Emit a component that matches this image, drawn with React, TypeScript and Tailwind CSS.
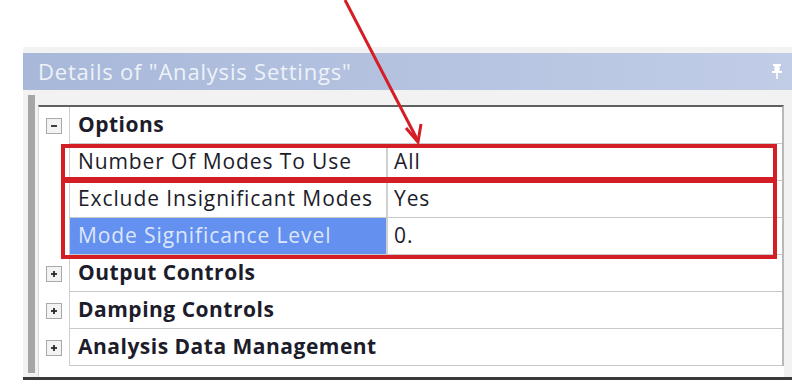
import React from "react";

// ── DETAILS PANEL DATA ────────────────────────────────────────
type Prop = { label: string; value: string; selected?: boolean };

const OPTIONS: Prop[] = [
  { label: "Number Of Modes To Use", value: "All" },
  { label: "Exclude Insignificant Modes", value: "Yes" },
  { label: "Mode Significance Level", value: "0.", selected: true },
];

const GROUPS = ["Output Controls", "Damping Controls", "Analysis Data Management"];
// ─────────────────────────────────────────────────────────────

const FONT = "font-['Open_Sans','Noto_Sans',sans-serif]";

function ExpandBox({ open }: { open: boolean }) {
  return (
    <div className="flex h-[16px] w-[16px] items-center justify-center border border-[#a9a9a9] bg-[#f3f3f3]">
      <svg width="10" height="10" viewBox="0 0 10 10">
        <path d="M2 5 H8" stroke="#2a2a2a" strokeWidth="1.8" />
        {!open && <path d="M5 2 V8" stroke="#2a2a2a" strokeWidth="1.8" />}
      </svg>
    </div>
  );
}

function GroupRow({ title, open }: { title: string; open: boolean }) {
  return (
    <div className="flex h-[37px]">
      <div className="flex w-[31px] shrink-0 items-center justify-center border-r border-[#cfcfcf] bg-white">
        <ExpandBox open={open} />
      </div>
      <div className="flex flex-1 items-center border-b border-[#c9c9c9] pl-[8px] text-[21px] font-bold tracking-[0.5px] text-[#1c1c2a]">
        {title}
      </div>
    </div>
  );
}

function PropRow({ p }: { p: Prop }) {
  return (
    <div className="flex h-[37px]">
      <div className="w-[31px] shrink-0 border-r border-[#cfcfcf] bg-white" />
      <div className="flex flex-1 border-b border-[#c9c9c9] text-[21px] tracking-[0.9px]">
        <div
          className={
            p.selected
              ? "flex w-[316px] items-center bg-[#6490f0] pl-[8px] text-[#dde7fb]"
              : "flex w-[316px] items-center pl-[8px] text-[#1c1c2a]"
          }
        >
          {p.label}
        </div>
        <div className="flex flex-1 items-center border-l-2 border-[#d0d0d0] pl-[6px] text-[#1c1c2a]">
          {p.value}
        </div>
      </div>
    </div>
  );
}

export default function App() {
  return (
    <div className={`relative h-[387px] w-[792px] overflow-hidden bg-white ${FONT}`}>
      <div className="h-[47px]" />

      {/* Panel */}
      <div className="ml-[23px] flex h-[333px] flex-col bg-[#f2f2f2] pt-[6px]">
        {/* Title bar */}
        <div className="flex h-[37px] items-center justify-between bg-gradient-to-r from-[#a8b8d9] to-[#c1cde7] pl-[15px] pr-[10px]">
          <span className="text-[22px] tracking-[0.8px] text-[#eef2f9]">Details of "Analysis Settings"</span>
          <svg width="10" height="15" viewBox="0 0 10 15" fill="#ffffff">
            <rect x="1" y="0" width="8" height="2" />
            <rect x="2.5" y="2" width="5" height="6" />
            <rect x="0" y="7" width="10" height="2" />
            <rect x="4.2" y="9" width="1.6" height="6" />
          </svg>
        </div>

        {/* Body */}
        <div className="flex flex-1 pl-[5px] pt-[5px]">
          <div className="mb-[4px] w-[7px] bg-[#a6a6a6]" />
          <div className="ml-[3px] flex w-[746px] flex-col pt-[10px]">
            <div className="flex flex-col border-l border-r-2 border-t-2 border-l-[#d6d6d6] border-r-[#b9b9b9] border-t-[#5f5f5f] bg-white">
              <GroupRow title="Options" open />
              {OPTIONS.map((p) => (
                <PropRow key={p.label} p={p} />
              ))}
              {GROUPS.map((g) => (
                <GroupRow key={g} title={g} open={false} />
              ))}
            </div>
            <div className="flex-1 border-l border-[#d6d6d6] bg-white" />
          </div>
        </div>
        <div className="h-[3px] bg-[#3a3a3a]" />
      </div>

      {/* Annotation overlay */}
      <svg className="absolute left-0 top-0" width="792" height="387" fill="none">
        <path d="M345 0 L418 141" stroke="#d41e26" strokeWidth="3" />
        <path d="M406 128 L418 142 L421 124" stroke="#d41e26" strokeWidth="3" />
        <rect x="63" y="146" width="712" height="33" stroke="#d41e26" strokeWidth="4" />
        <rect x="63" y="181" width="712" height="76" stroke="#d41e26" strokeWidth="4" />
      </svg>
    </div>
  );
}
